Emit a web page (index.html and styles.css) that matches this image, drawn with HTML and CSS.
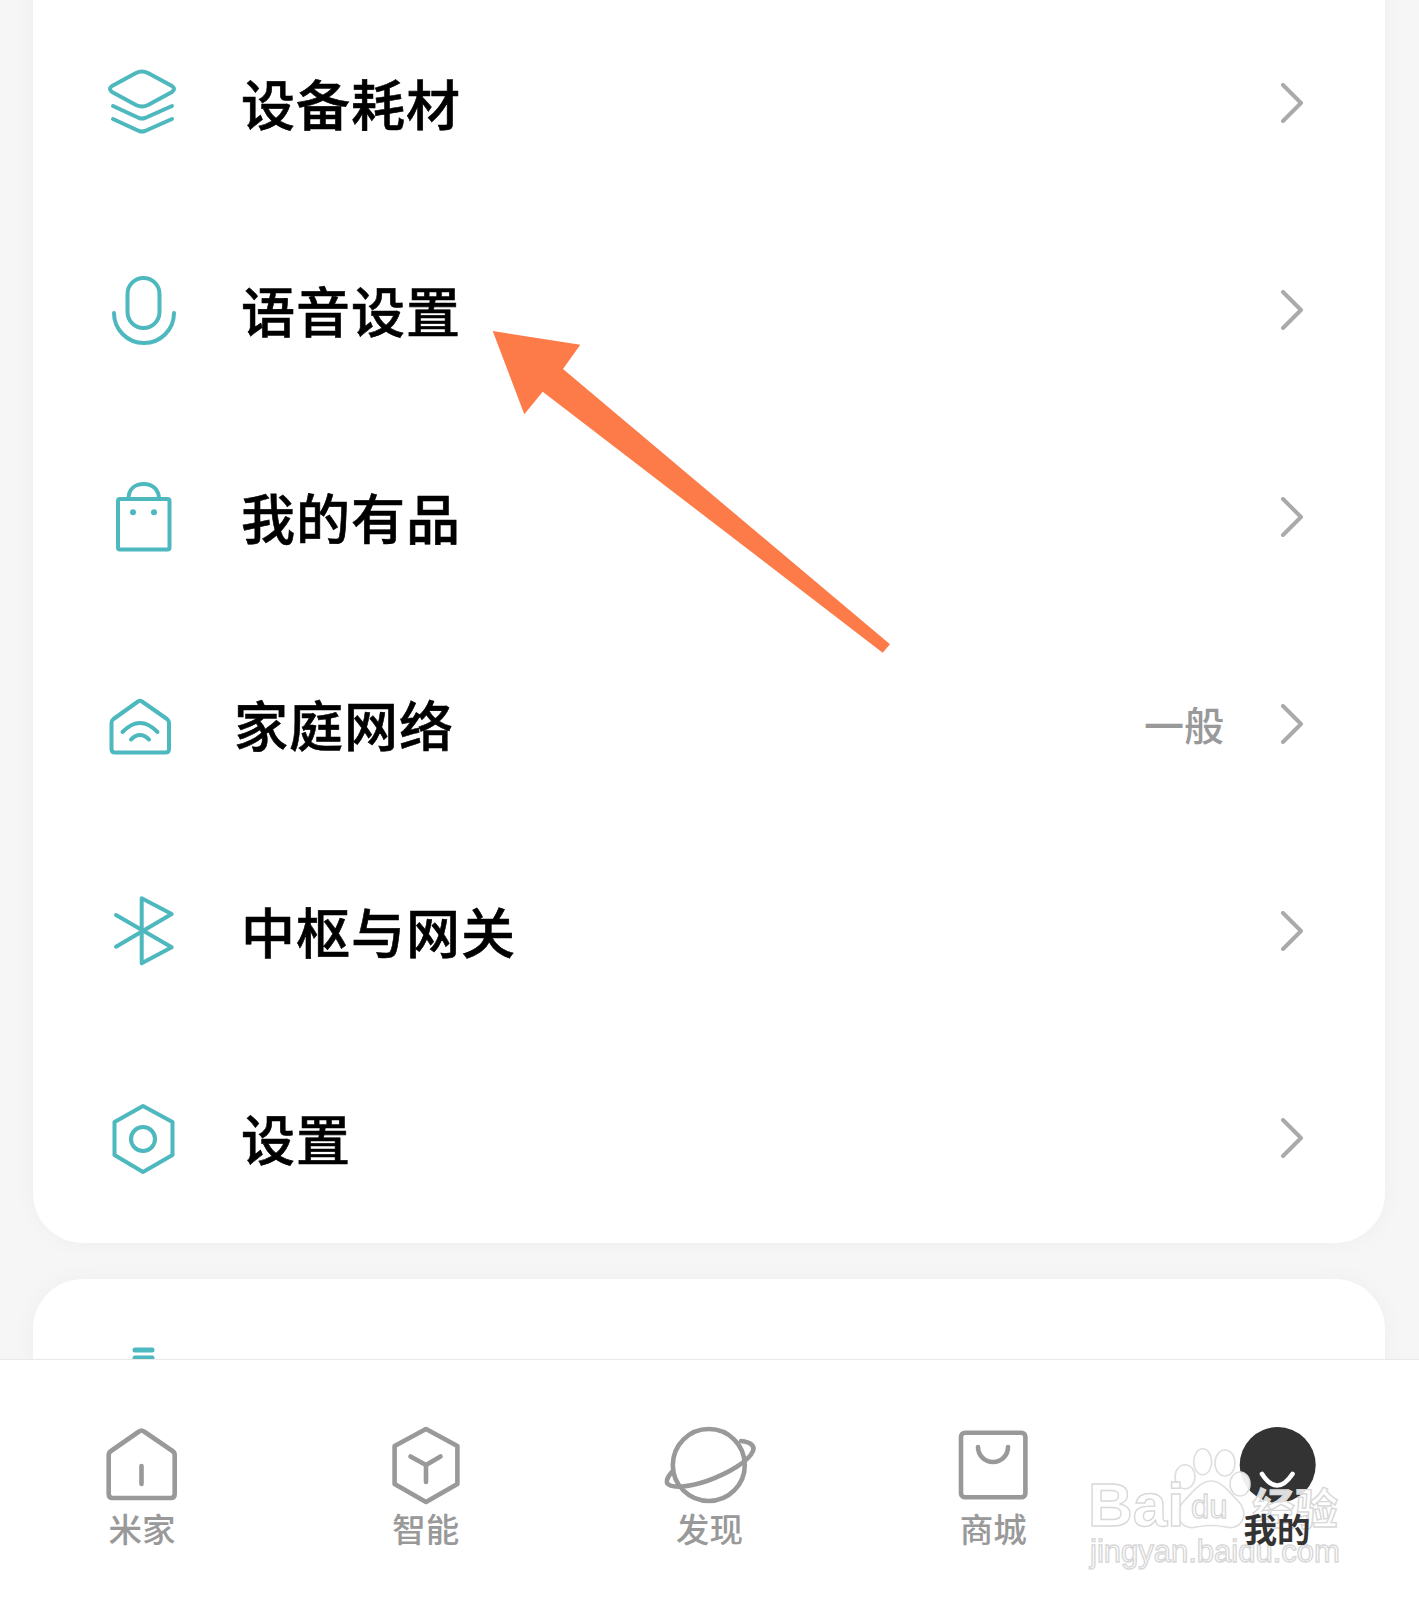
FILE: index.html
```html
<!DOCTYPE html>
<html lang="zh-CN">
<head>
    <meta charset="UTF-8">
    <meta name="viewport" content="width=device-width, initial-scale=1.0">
    <title>我的</title>
    <link rel="stylesheet" href="styles.css">
</head>
<body>
    <div class="screen">
        <div class="content">
            <div class="card card-top">
                <div class="row">
                    <svg class="row-icon" viewBox="0 0 80 80"><path d="M33 8Q39 5 45 8L69 21Q73 24 69 27L45 40Q39 43 33 40L9 27Q5 24 9 21Z"/><path d="M10 41L36 53Q39 54 42 53L69 41"/><path d="M10 54L36 66Q39 67 42 66L69 54"/></svg>
                    <span class="row-title">设备耗材</span>
                    <svg class="chevron" viewBox="0 0 24 40"><path d="M3 2L21 20L3 38"/></svg>
                </div>
                <div class="row">
                    <svg class="row-icon" viewBox="0 0 80 80"><rect x="24.5" y="6" width="32" height="50" rx="16"/><path d="M11 41A30 30 0 0 0 71 41"/></svg>
                    <span class="row-title">语音设置</span>
                    <svg class="chevron" viewBox="0 0 24 40"><path d="M3 2L21 20L3 38"/></svg>
                </div>
                <div class="row">
                    <svg class="row-icon" viewBox="0 0 80 80"><rect x="15" y="20" width="51.5" height="50.5" rx="2"/><path d="M25.5 20C25.5 10 32 5 41 5S56 11 56 20"/><circle class="dot" cx="30" cy="33.3" r="3"/><circle class="dot" cx="51" cy="33.3" r="3"/></svg>
                    <span class="row-title">我的有品</span>
                    <svg class="chevron" viewBox="0 0 24 40"><path d="M3 2L21 20L3 38"/></svg>
                </div>
                <div class="row">
                    <svg class="row-icon" viewBox="0 0 80 80"><path d="M35 15.5Q37 14 39 15.5L64 33Q66 34.5 66 37V63Q66 66.5 62.5 66.5H12Q8.5 66.5 8.5 63V37Q8.5 34.5 10.5 33Z"/><path d="M19.5 46Q37 28 54.5 46"/><path d="M28 53.5Q37 44.5 46 53.5"/></svg>
                    <span class="row-title row-title-shift">家庭网络</span>
                    <span class="row-value">一般</span>
                    <svg class="chevron chevron-value" viewBox="0 0 24 40"><path d="M3 2L21 20L3 38"/></svg>
                </div>
                <div class="row">
                    <svg class="row-icon" viewBox="0 0 80 80"><path d="M13 22L68.7 54.3L38.7 70.3V5.3L68.7 21L13 53.7"/></svg>
                    <span class="row-title">中枢与网关</span>
                    <svg class="chevron" viewBox="0 0 24 40"><path d="M3 2L21 20L3 38"/></svg>
                </div>
                <div class="row">
                    <svg class="row-icon" viewBox="0 0 80 80"><path d="M40 6L69.5 22V55L40 72L11.5 55V22Z"/><circle cx="40" cy="39" r="12"/></svg>
                    <span class="row-title">设置</span>
                    <svg class="chevron" viewBox="0 0 24 40"><path d="M3 2L21 20L3 38"/></svg>
                </div>
            </div>
            <div class="card">
                <div class="row">
                    <svg class="row-icon" viewBox="0 0 80 80"><path class="thick" d="M32 7H49"/><path class="thick" d="M32 15H49"/><path class="thick" d="M32 23H49"/></svg>
                </div>
            </div>
        </div>

        <div class="tabbar">
            <div class="tab">
                <svg class="tab-icon" viewBox="0 0 80 80"><path d="M37 8.5Q39.5 6.5 42 8.5L70.5 28Q72.7 29.5 72.7 32V71Q72.7 75 68.7 75H10.7Q6.7 75 6.7 71V32Q6.7 29.5 9 28Z"/><path d="M39.5 43V61"/></svg>
                <span class="tab-label">米家</span>
            </div>
            <div class="tab">
                <svg class="tab-icon" viewBox="0 0 80 80"><path d="M40 6L71.4 23V61L40 79L8.6 61V23Z"/><path d="M24.5 33.5L40 42L54.5 33.5M40 42V59"/></svg>
                <span class="tab-label">智能</span>
            </div>
            <div class="tab">
                <svg class="tab-icon" viewBox="0 0 80 80"><circle cx="39.8" cy="42" r="36"/><path d="M72 18C82 19 86 23 84 28C80 38 60 50 38 58C20 64 2 66 -2 60C-3 56 0 52 4 48"/></svg>
                <span class="tab-label">发现</span>
            </div>
            <div class="tab">
                <svg class="tab-icon" viewBox="0 0 80 80"><rect x="8" y="9.7" width="64.4" height="64.6" rx="4"/><path d="M25 24A15 15 0 0 0 55 24"/></svg>
                <span class="tab-label">商城</span>
            </div>
            <div class="tab tab-active">
                <svg class="tab-icon" viewBox="0 0 80 80"><circle class="face" cx="40.7" cy="42" r="38"/><path class="smile" d="M25 51Q40 74 55.5 51"/></svg>
                <span class="tab-label">我的</span>
            </div>

            <div class="watermark">
                <svg class="wm-paw" viewBox="0 0 120 100"><ellipse cx="15" cy="41.7" rx="10" ry="12"/><ellipse cx="32.7" cy="26.7" rx="9" ry="13"/><ellipse cx="55" cy="28" rx="10" ry="13"/><ellipse cx="70" cy="49" rx="10" ry="12"/><path d="M41 46C52 46 60 58 68 66C80 78 72 96 56 92C46 90 36 90 26 92C10 96 2 78 14 66C22 58 30 46 41 46Z"/></svg>
                <span class="wm-text wm-bai">Bai</span>
                <span class="wm-text wm-du">du</span>
                <span class="wm-text wm-jy">经验</span>
                <span class="wm-text wm-url">jingyan.baidu.com</span>
            </div>
        </div>

        <svg class="arrow" viewBox="0 0 1419 1600"><polygon points="492.7,331 580.3,344.7 563,369 890,644.3 882.7,652.7 542.7,391.7 524.3,414.3"/></svg>
    </div>
</body>
</html>
```

FILE: styles.css
```css
* {
    box-sizing: border-box;
}
body {
    margin: 0;
    background-color: #f6f6f6;
    font-family: "Noto Sans CJK SC", "Noto Sans", sans-serif;
}
.screen {
    position: relative;
    display: flex;
    flex-direction: column;
    width: 1419px;
    height: 1600px;
    overflow: hidden;
}
.content {
    height: 1359px;
    flex: none;
    overflow: hidden;
    padding: 0 34px 0 33px;
}
.card {
    background-color: white;
    border-radius: 50px;
    box-shadow: 0 0 24px rgba(0, 0, 0, 0.035);
    margin-bottom: 36px;
}
.card-top {
    margin-top: -60px;
    padding-top: 61px;
}
.row {
    display: flex;
    align-items: center;
    height: 207px;
    padding: 0 81px 0 70px;
}
.row-icon {
    width: 80px;
    height: 80px;
    flex: none;
    margin-right: 58px;
    overflow: visible;
    fill: none;
    stroke: #4db8be;
    stroke-width: 4;
    stroke-linecap: round;
    stroke-linejoin: round;
}
.row-icon .dot {
    fill: #4db8be;
    stroke: none;
}
.row-icon .thick {
    stroke-width: 5;
}
.row-title {
    font-size: 54px;
    font-weight: 500;
    letter-spacing: 1px;
    line-height: 70px;
    padding-bottom: 4px;
    box-sizing: content-box;
    color: #000;
    -webkit-text-stroke: 0.6px #000;
}
.row-title-shift {
    margin-left: -7px;
}
.row-value {
    margin-left: auto;
    padding-bottom: 4px;
    font-size: 40px;
    font-weight: 500;
    color: #999;
}
.chevron {
    width: 24px;
    height: 40px;
    flex: none;
    margin: -4px 0 0 auto;
    fill: none;
    stroke: #aaa;
    stroke-width: 4;
    stroke-linecap: round;
    stroke-linejoin: round;
}
.chevron-value {
    margin-left: 56px;
}
.tabbar {
    position: relative;
    display: flex;
    flex: 1;
    background-color: white;
    border-top: 1px solid #e9e9e9;
}
.tab {
    display: flex;
    flex-direction: column;
    align-items: center;
    width: 20%;
    padding-top: 63px;
}
.tab-icon {
    width: 80px;
    height: 80px;
    overflow: visible;
    fill: none;
    stroke: #999;
    stroke-width: 4.6;
    stroke-linecap: round;
    stroke-linejoin: round;
}
.tab-icon .face {
    fill: #333;
    stroke: none;
}
.tab-icon .smile {
    stroke: white;
    stroke-width: 4.6;
}
.tab-label {
    font-size: 33.5px;
    font-weight: 500;
    line-height: 50px;
    color: #999;
}
.tab-active .tab-label {
    position: relative;
    z-index: 1;
    font-weight: 700;
    color: #333;
}
.arrow {
    position: absolute;
    left: 0;
    top: 0;
    width: 1419px;
    height: 1600px;
    fill: #fd7b48;
}
.watermark {
    position: absolute;
    left: 1085px;
    top: 75px;
    width: 270px;
    height: 140px;
}
.wm-paw {
    position: absolute;
    left: 85px;
    top: 0;
    width: 120px;
    height: 100px;
    fill: rgba(255, 255, 255, 0.92);
    stroke: #dedede;
    stroke-width: 1.6;
}
.wm-text {
    position: absolute;
    white-space: nowrap;
    color: rgba(255, 255, 255, 0.85);
    -webkit-text-stroke: 1.4px #d8d8d8;
}
.wm-bai {
    left: 3px;
    top: 34px;
    font-family: "Liberation Sans", sans-serif;
    font-size: 62px;
    line-height: 72px;
    font-weight: 700;
}
.wm-du {
    left: 106px;
    top: 52px;
    font-family: "Liberation Sans", sans-serif;
    font-size: 33px;
    line-height: 40px;
}
.wm-jy {
    left: 167px;
    top: 41px;
    font-size: 43px;
    line-height: 60px;
    font-weight: 700;
}
.wm-url {
    left: 5px;
    top: 99px;
    font-family: "Liberation Sans", sans-serif;
    font-size: 31px;
    line-height: 36px;
}
```
